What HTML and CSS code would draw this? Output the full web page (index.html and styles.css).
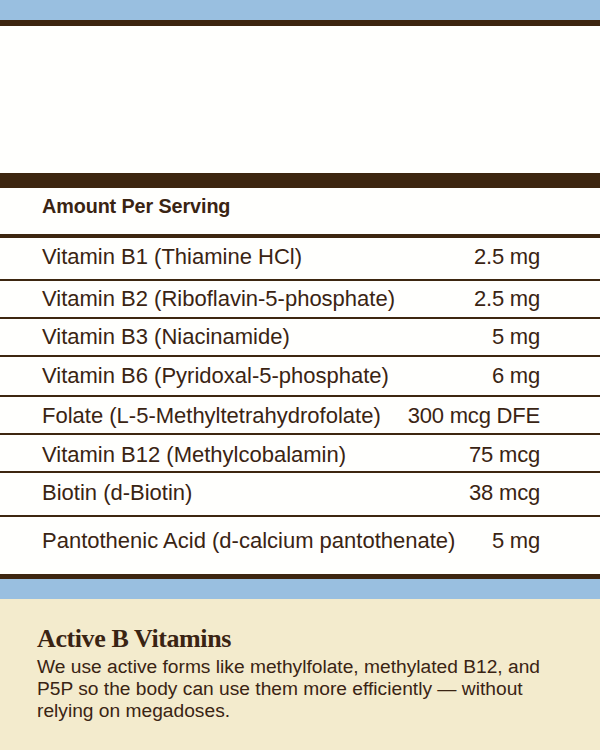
FILE: index.html
```html
<!DOCTYPE html>
<html lang="en">
<head>
<meta charset="utf-8">
<title>Supplement Facts</title>
<link rel="stylesheet" href="styles.css">
</head>
<body>
<div class="page">
  <div class="band-top"></div>
  <div class="blank"></div>
  <section class="facts">
    <div class="facts-head">Amount Per Serving</div>
    <div class="row r-b1"><span class="name">Vitamin B1 (Thiamine HCl)</span><span class="amt">2.5 mg</span></div>
    <div class="row r-b2"><span class="name">Vitamin B2 (Riboflavin-5-phosphate)</span><span class="amt">2.5 mg</span></div>
    <div class="row r-b3"><span class="name">Vitamin B3 (Niacinamide)</span><span class="amt">5 mg</span></div>
    <div class="row r-b6"><span class="name">Vitamin B6 (Pyridoxal-5-phosphate)</span><span class="amt">6 mg</span></div>
    <div class="row r-fol"><span class="name">Folate (L-5-Methyltetrahydrofolate)</span><span class="amt">300 mcg DFE</span></div>
    <div class="row r-b12"><span class="name">Vitamin B12 (Methylcobalamin)</span><span class="amt">75 mcg</span></div>
    <div class="row r-bio"><span class="name">Biotin (d-Biotin)</span><span class="amt">38 mcg</span></div>
    <div class="row r-pan last"><span class="name">Pantothenic Acid (d-calcium pantothenate)</span><span class="amt">5 mg</span></div>
  </section>
  <div class="band-bottom"></div>
  <section class="note">
    <h2 class="note-title">Active B Vitamins</h2>
    <p class="note-text">We use active forms like methylfolate, methylated B12, and P5P so the body can use them more efficiently — without relying on megadoses.</p>
  </section>
</div>
</body>
</html>
```
FILE: styles.css
```css
html, body {
  margin: 0;
  padding: 0;
}
body {
  background: #f3ebcd;
  font-family: "Liberation Sans", Arial, sans-serif;
  color: #3a2413;
}
.page {
  width: 600px;
  min-height: 750px;
  display: flex;
  flex-direction: column;
}
.band-top {
  height: 20px;
  background: #99bfe0;
  border-bottom: 6px solid #3d2610;
}
.blank {
  height: 147px;
  background: #fffffd;
}
.facts {
  background: #fffffd;
  border-top: 15px solid #3d2610;
  border-bottom: 5px solid #3d2610;
}
.facts-head {
  font-weight: bold;
  font-size: 19.8px;
  line-height: 23px;
  padding: 7px 60px 16px 42px;
  border-bottom: 4px solid #3d2610;
  letter-spacing: -0.1px;
}
.row {
  display: flex;
  justify-content: space-between;
  align-items: baseline;
  padding: 0 60px 0 42px;
  font-size: 22px;
  line-height: 25px;
  border-bottom: 2px solid #3d2610;
  box-sizing: border-box;
}
.row.last {
  border-bottom: none;
}
.amt {
  letter-spacing: -0.2px;
}
.r-b1 { height: 43px; padding-top: 6px; }
.r-b2 { height: 38px; padding-top: 5px; }
.r-b3 { height: 38px; padding-top: 5px; }
.r-b6 { height: 40px; padding-top: 6px; }
.r-fol { height: 38px; padding-top: 6px; }
.r-b12 { height: 38px; padding-top: 7px; }
.r-bio { height: 44px; padding-top: 7px; }
.r-pan { height: 57px; padding-top: 11px; }
.band-bottom {
  height: 20px;
  background: #99bfe0;
}
.note {
  flex: 1;
  background: #f3ebcd;
  padding: 26px 37px 20px 37px;
}
.note-title {
  margin: 0;
  font-family: "Liberation Serif", "Times New Roman", serif;
  font-weight: bold;
  font-size: 26px;
  line-height: 28px;
  letter-spacing: -0.4px;
}
.note-text {
  margin: 3px 0 0 0;
  font-size: 19.2px;
  line-height: 22px;
}
```
